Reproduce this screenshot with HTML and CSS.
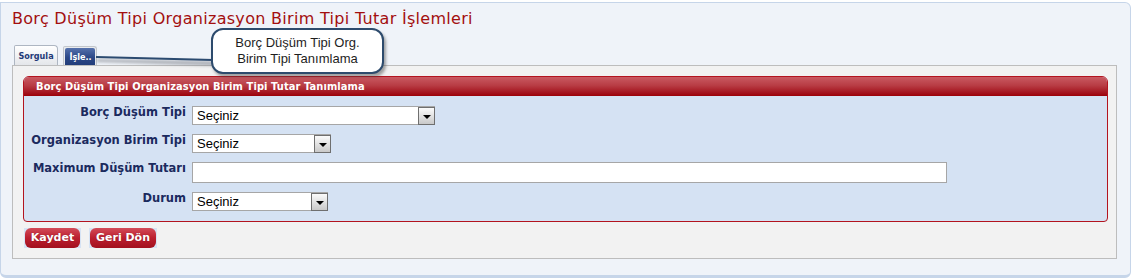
FILE: index.html
```html
<!DOCTYPE html>
<html lang="tr">
<head>
<meta charset="utf-8">
<title>Borç Düşüm Tipi Organizasyon Birim Tipi Tutar İşlemleri</title>
<link rel="stylesheet" href="styles.css">
</head>
<body>
<div class="page">
  <h1 class="title">Borç Düşüm Tipi Organizasyon Birim Tipi Tutar İşlemleri</h1>
  <div class="tabs">
    <a class="tab">Sorgula</a>
    <a class="tab tab-active"><span>İşle..</span></a>
  </div>
  <div class="panel">
    <div class="box">
      <div class="box-head">Borç Düşüm Tipi Organizasyon Birim Tipi Tutar Tanımlama</div>
      <div class="form">
        <label class="lbl">Borç Düşüm Tipi</label>
        <div class="sel sel-w1"><select><option>Seçiniz</option></select><span class="arr"></span></div>
        <label class="lbl">Organizasyon Birim Tipi</label>
        <div class="sel sel-w2"><select><option>Seçiniz</option></select><span class="arr"></span></div>
        <label class="lbl">Maximum Düşüm Tutarı</label>
        <div><input class="txt" type="text"></div>
        <label class="lbl">Durum</label>
        <div class="sel sel-w3"><select><option>Seçiniz</option></select><span class="arr"></span></div>
      </div>
    </div>
    <div class="actions">
      <button class="btn btn-save"><span>Kaydet</span></button>
      <button class="btn btn-back"><span>Geri Dön</span></button>
    </div>
  </div>
  <svg class="connector" width="124" height="16" viewBox="0 0 124 16">
    <defs><filter id="blur" x="-10%" y="-100%" width="120%" height="300%"><feGaussianBlur stdDeviation="1.4"/></filter></defs>
    <polygon points="2,6 118,8 118,13 2,9" fill="#7b7f86" opacity="0.55" filter="url(#blur)"/>
    <line x1="1" y1="4" x2="118" y2="7" stroke="#2b4a70" stroke-width="2"/>
  </svg>
  <div class="callout">Borç Düşüm Tipi Org.<br>Birim Tipi Tanımlama</div>
</div>
</body>
</html>
```
FILE: styles.css
```css
* { box-sizing: border-box; }
html, body { margin: 0; padding: 0; background: #ffffff; }
body { font-family: "DejaVu Sans", Verdana, sans-serif; }

.page {
  position: relative;
  margin-top: 2px;
  height: 276px;
  border: 1px solid #c6d5e9;
  border-bottom-width: 3px;
  border-radius: 0 6px 6px 6px;
  background: #eff3f9;
  padding: 0 13px 0 11px;
}

.title {
  margin: 7px 0 0 0;
  font-weight: normal;
  font-size: 16px;
  letter-spacing: 0.3px;
  line-height: 18px;
  color: #a30f0f;
}

.tabs {
  display: flex;
  align-items: flex-end;
  gap: 5px;
  height: 20px;
  margin: 17px 0 0 2px;
}
.tab {
  display: block;
  font-family: "DejaVu Sans Condensed", "DejaVu Sans", sans-serif;
  font-stretch: condensed;
  font-weight: bold;
  font-size: 9px;
  text-decoration: none;
}
.tab:first-child {
  height: 20px;
  width: 44px;
  border: 1px solid #aeb6c2;
  border-bottom: 0;
  border-radius: 2px 4px 0 0;
  background: linear-gradient(#ffffff, #e4e6ea);
  color: #1f3a78;
  text-align: center;
  line-height: 21px;
}
.tab-active {
  height: 19px;
  width: 34px;
  border: 1px solid #c2c6cc;
  border-bottom: 0;
  border-radius: 2px 3px 0 0;
  background: #e9ebee;
  padding: 1px 1px 0 1px;
}
.tab-active span {
  display: block;
  height: 100%;
  border-radius: 2px 2px 0 0;
  background: linear-gradient(#5672ad, #2c4887 55%, #223d7a);
  color: #ffffff;
  text-align: center;
  line-height: 18px;
  padding-left: 1px;
}

.panel {
  border: 1px solid #bdbdbd;
  background: #f2f2f2;
  padding: 10px 8px 10px 10px;
}

.box {
  border: 1px solid #b3141f;
  border-radius: 6px 6px 4px 4px;
  background: #d5e2f3;
  overflow: hidden;
}
.box-head {
  height: 19px;
  padding-left: 12px;
  background: linear-gradient(#c95a62, #b83c44 45%, #a3111b 85%, #9c0008);
  color: #ffffff;
  font-family: "DejaVu Sans Condensed", "DejaVu Sans", sans-serif;
  font-stretch: condensed;
  font-weight: bold;
  font-size: 11px;
  letter-spacing: 0.1px;
  line-height: 19px;
}

.form {
  display: grid;
  grid-template-columns: 162px auto;
  column-gap: 6px;
  row-gap: 9px;
  padding: 10px 0 10px 0;
  align-items: start;
}
.lbl {
  text-align: right;
  font-weight: bold;
  font-size: 11.5px;
  line-height: 12px;
  color: #1b2a5e;
}

.sel {
  position: relative;
  height: 19px;
}
.sel-w1 { width: 243px; }
.sel-w2 { width: 139px; }
.sel-w3 { width: 136px; }
.sel select {
  -webkit-appearance: none;
  appearance: none;
  display: block;
  width: 100%;
  height: 19px;
  margin: 0;
  border: 1px solid #a6a6a6;
  border-radius: 0;
  background: #ffffff;
  padding: 0 0 0 4px;
  font-family: "Liberation Sans", Arial, sans-serif;
  font-size: 13px;
  color: #000000;
}
.arr {
  position: absolute;
  top: 1px;
  right: 0;
  width: 17px;
  height: 18px;
  border: 1px solid #6f6f6f;
  background: linear-gradient(#fbfbfb, #e2e2e2 50%, #c9c9c9);
}
.arr::after {
  content: "";
  position: absolute;
  left: 4px;
  top: 7px;
  border-left: 4px solid transparent;
  border-right: 4px solid transparent;
  border-top: 4px solid #000000;
}

.txt {
  display: block;
  width: 755px;
  height: 21px;
  margin: 0;
  border: 1px solid #a6a6a6;
  background: #ffffff;
  padding: 0 4px;
  font-family: "Liberation Sans", Arial, sans-serif;
  font-size: 13px;
}

.actions {
  display: flex;
  gap: 8px;
  margin: 6px 0 0 1px;
}
.btn {
  display: block;
  height: 20px;
  border: 0;
  margin: 0;
  padding: 0 1px;
  background: #d6e3f4;
  cursor: pointer;
}
.btn-save { width: 57px; }
.btn-back { width: 68px; }
.btn span {
  display: block;
  height: 20px;
  border-radius: 6px;
  background: linear-gradient(#d34a57, #bb1f2f 50%, #a3101e);
  color: #ffffff;
  font-family: "DejaVu Sans", Verdana, sans-serif;
  font-weight: bold;
  font-size: 11px;
  line-height: 20px;
  text-align: center;
  text-shadow: 0 0 1px rgba(80, 0, 0, 0.5);
}

.connector {
  position: absolute;
  left: 94px;
  top: 50px;
}
.callout {
  position: absolute;
  left: 210px;
  top: 25px;
  width: 173px;
  border: 2px solid #2d4b6d;
  border-radius: 12px;
  background: #ffffff;
  box-shadow: 2px 3px 3px rgba(60, 60, 60, 0.45);
  padding: 5px 4px 5px 4px;
  font-family: "Liberation Sans", Arial, sans-serif;
  font-size: 13px;
  line-height: 16px;
  color: #1e1e1e;
  text-align: center;
}
```
